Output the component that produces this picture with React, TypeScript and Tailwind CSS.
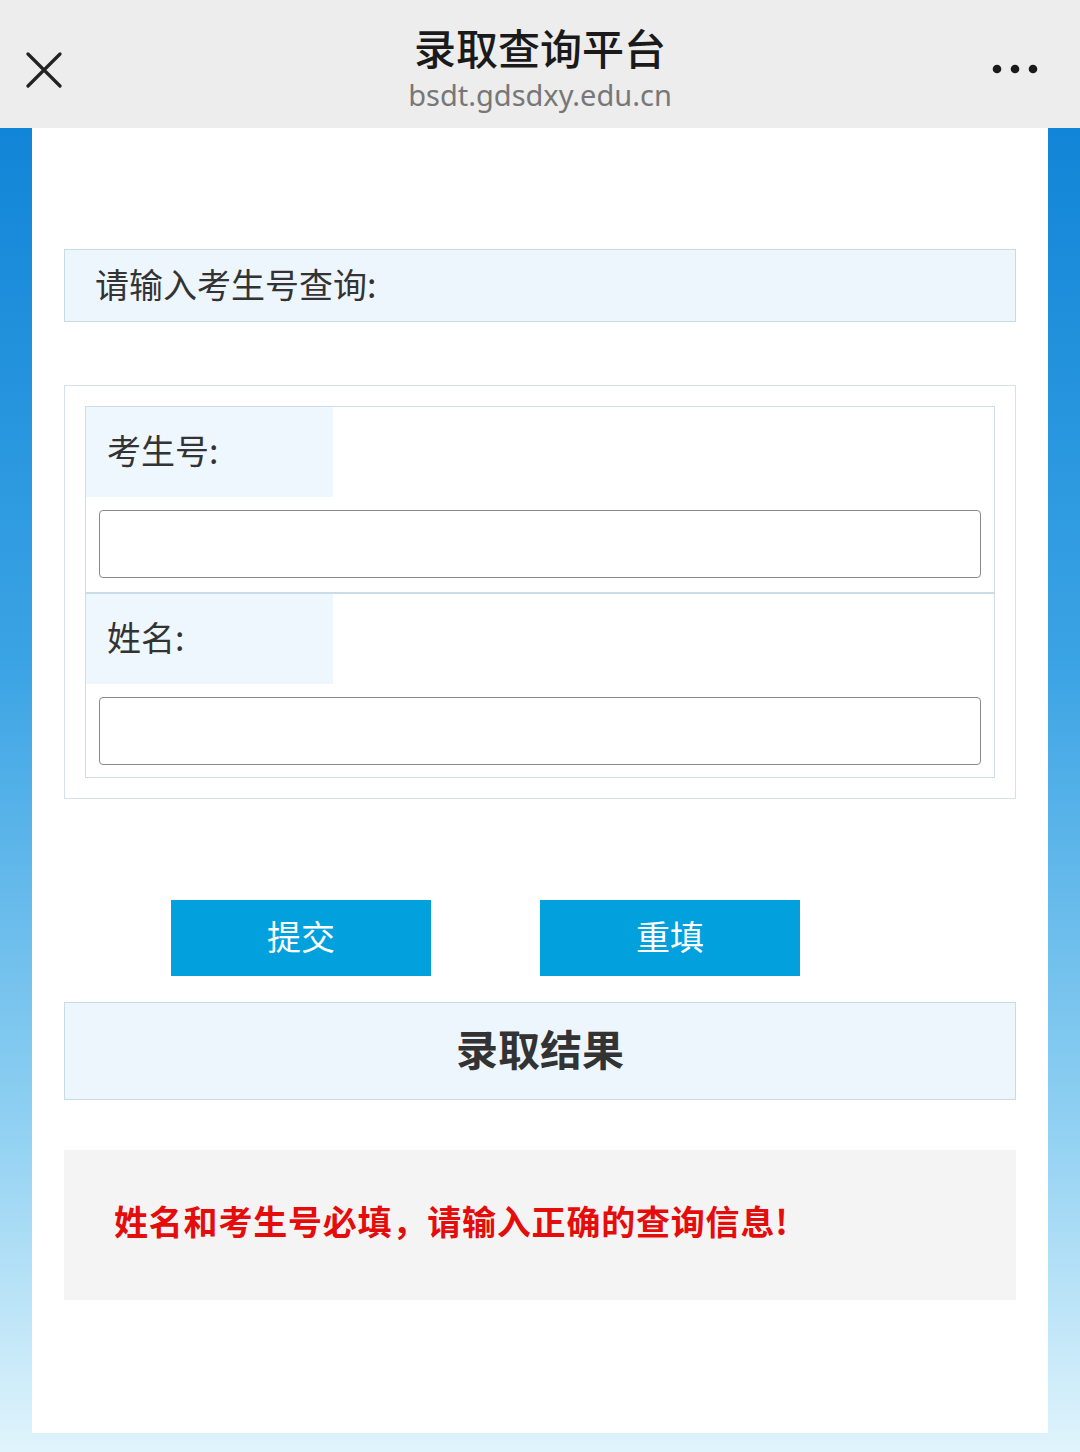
import React from "react";

const cjk = { fontFamily: '"Noto Sans CJK SC", "Noto Sans", sans-serif' };

function FieldRow({ label, last }: { label: string; last?: boolean }) {
  return (
    <div className={last ? "" : "border-b-[2px] border-[#c9dce8]"}>
      <div className="flex h-[90px] w-[247px] items-center bg-[#eef7fd] pb-[6px] pl-[21px] text-[34px] text-[#333]">
        {label}
      </div>
      <div className={last ? "px-[13px] pb-[12px] pt-[13px]" : "px-[13px] pb-[14px] pt-[13px]"}>
        <input
          type="text"
          className="block h-[68px] w-full rounded-[4px] border-[1.5px] border-[#8a8a8a] bg-white px-3 text-[30px] outline-none"
        />
      </div>
    </div>
  );
}

export default function App() {
  return (
    <div className="flex min-h-[1452px] w-[1080px] flex-col" style={cjk}>
      {/* 顶栏 */}
      <div className="relative flex h-[128px] flex-col items-center bg-[#ededed]">
        <svg className="absolute left-[26px] top-[52px]" width="36" height="36" viewBox="0 0 36 36">
          <path d="M2 2 L34 34 M34 2 L2 34" stroke="#222" strokeWidth="3.2" strokeLinecap="round" />
        </svg>
        <div className="mt-[22px] text-[42px] font-medium leading-[50px] text-[#1a1a1a]">录取查询平台</div>
        <div className="mt-[5px] text-[29px] leading-[36px] text-[#777]" style={{ fontFamily: '"Noto Sans", sans-serif' }}>
          bsdt.gdsdxy.edu.cn
        </div>
        <svg className="absolute right-[40px] top-[63px]" width="48" height="12" viewBox="0 0 48 12">
          <circle cx="5" cy="6" r="4.3" fill="#1a1a1a" />
          <circle cx="23" cy="6" r="4.3" fill="#1a1a1a" />
          <circle cx="41" cy="6" r="4.3" fill="#1a1a1a" />
        </svg>
      </div>

      {/* 主体 */}
      <div className="flex flex-1 flex-col bg-[linear-gradient(180deg,#1185d7_0%,#3aa3e4_40%,#8fd0f2_75%,#e0f4fc_100%)] px-[32px] pb-[19px]">
        <div className="flex h-[1305px] flex-col bg-white px-[32px] pt-[121px]">
          <div className="flex h-[73px] items-center border border-[#c7dbe9] bg-[#eef6fd] pb-[4px] pl-[30px] text-[34px] text-[#333]">
            请输入考生号查询:
          </div>

          <div className="mt-[63px] border border-[#d3e2ea] p-[20px]">
            <div className="border border-[#cfdde6]">
              <FieldRow label="考生号:" />
              <FieldRow label="姓名:" last />
            </div>
          </div>

          <div className="mt-[101px] flex gap-[109px] pl-[107px]">
            <button className="h-[76px] w-[260px] bg-[#02a1de] pb-[6px] text-[34px] text-white">提交</button>
            <button className="h-[76px] w-[260px] bg-[#02a1de] pb-[6px] text-[34px] text-white">重填</button>
          </div>

          <div className="mt-[26px] flex h-[98px] items-center justify-center border border-[#c7dbe9] bg-[#eef6fd] pb-[8px] text-[42px] font-bold text-[#333]">
            录取结果
          </div>

          <div className="mt-[50px] flex h-[150px] items-center bg-[#f4f4f4] pb-[10px] pl-[50px] text-[34px] font-bold tracking-[0.8px] text-[#e50c0c]">
            姓名和考生号必填，请输入正确的查询信息!
          </div>
        </div>
      </div>
    </div>
  );
}
